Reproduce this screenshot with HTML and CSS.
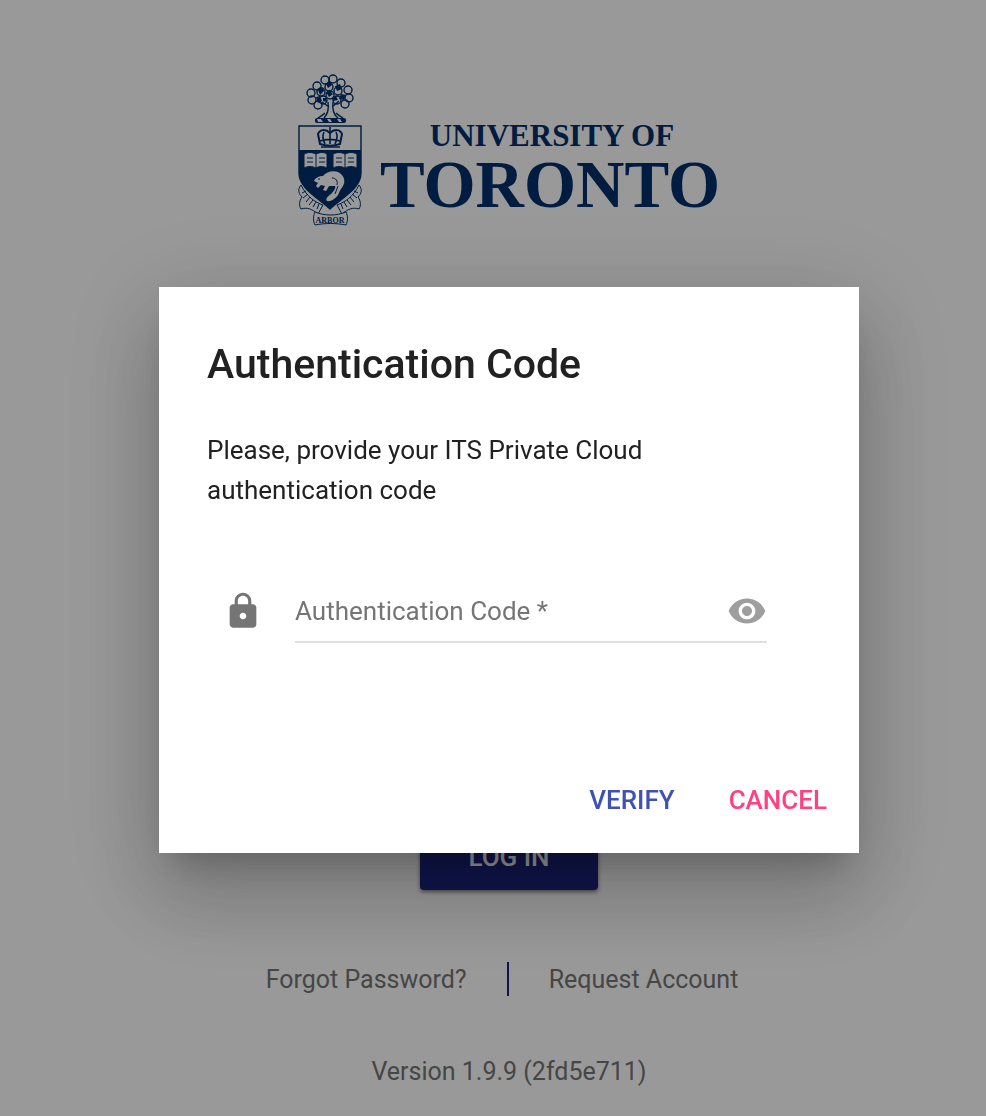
FILE: index.html
```html
<!DOCTYPE html>
<html lang="en">
<head>
    <meta charset="UTF-8">
    <meta name="viewport" content="width=device-width, initial-scale=1.0">
    <title>ITS Private Cloud</title>
    <link rel="stylesheet" href="styles.css">
</head>
<body>
    <main class="login-page">
        <svg class="logo" viewBox="-1 0 424 152" role="img" aria-label="University of Toronto">
            <!-- tree -->
            <g fill="none" stroke="#00306b" stroke-width="1.4">
                <circle cx="27" cy="6" r="4"/><circle cx="35" cy="5" r="4"/><circle cx="43" cy="9" r="4"/>
                <circle cx="19" cy="12" r="4"/><circle cx="50" cy="16" r="4"/><circle cx="13" cy="19" r="4"/>
                <circle cx="51" cy="24" r="4"/><circle cx="14" cy="26" r="4"/><circle cx="47" cy="30" r="4"/>
                <circle cx="20" cy="31" r="4"/><circle cx="23" cy="18" r="4"/><circle cx="31" cy="13" r="4"/>
                <circle cx="40" cy="17" r="4"/><circle cx="25" cy="26" r="4"/><circle cx="39" cy="26" r="4"/>
                <circle cx="32" cy="21" r="4"/>
                <path d="M30 28c1 7 0 12-4 16M35 28c-1 7 0 12 5 16M31 33l-7-5M34 33l7-6M20 44c3-2 5-3 7-5M45 44c-3-2-5-3-7-5"/>
            </g>
            <g fill="#00306b">
                <path d="M20 16l5-3 1 4-4 4zM28 10l4-3 2 4-4 3zM37 12l5-2 2 5-5 2zM43 20l5 1-2 5-5-1zM18 23l4-1 2 5-4 2zM28 18l4-1 3 3-4 3zM34 23l4-1 2 4-5 1zM25 24l3 0 1 4-4-1z"/>
                <rect x="17" y="44" width="31" height="5" rx="2"/>
            </g>
            <path d="M19 45h4l2 3h-5zM29 45h3l2 3h-3zM39 45h3l2 3h-3z" fill="#fff"/>
            <!-- motto ribbons -->
            <g fill="#fff" stroke="#00306b" stroke-width="1">
                <path d="M3 111c-4 5-2 9 1 12-3 4-3 9-1 12 6-2 11 0 17 5l5-9C17 128 9 123 3 111z"/>
                <path d="M61 111c4 5 2 9-1 12 3 4 3 9 1 12-6-2-11 0-17 5l-5-9c8-3 16-8 22-20z"/>
                <path d="M17 138c10 4 21 4 31 0 2 4 2 9 0 13-10-2-21-2-31 0-2-4-2-9 0-13z"/>
                <path d="M4 119l4-2M5 124l5-4M8 128l4-5M11 131l4-5M15 133l3-5M19 135l2-5M60 119l-4-2M59 124l-5-4M56 128l-4-5M53 131l-4-5M49 133l-3-5M45 135l-2-5"/>
            </g>
            <!-- shield -->
            <path d="M1 52h62v47c0 15-18 24-31 36C19 123 1 114 1 99z" fill="#fff" stroke="#00306b" stroke-width="1.4"/>
            <path d="M1 76h62v23c0 15-18 24-31 36C19 123 1 114 1 99z" fill="#00306b"/>
            <g fill="#fff" stroke="#00306b" stroke-width="1">
                <path d="M22 70l-2-10c2-5 8-5 12-1 4-4 10-4 12 1l-2 10c-6 2-14 2-20 0z" stroke-width="2"/>
                <path d="M32 53v17M26 58c-2 4-1 8 1 12M38 58c2 4 1 8-1 12M22 67c6-2 14-2 20 0M23 73h19" fill="none" stroke-width="1.6"/>
                <path d="M6 80c4-2 8-2 12 0 4-2 8-2 11 0v14c-4-2-8-2-11 0-4-2-8-2-12 0zM35 80c4-2 8-2 12 0 4-2 8-2 12 0v14c-4-2-8-2-12 0-4-2-8-2-12 0z"/>
                <path d="M18 80v14M47 80v14M9 84h6M9 88h6M21 84h6M21 88h6M38 84h6M38 88h6M50 84h6M50 88h6"/>
            </g>
            <!-- beaver -->
            <path d="M16 107c1-3 5-5 9-5 3-4 10-6 15-4 6 3 8 9 5 14-2 3-3 4-4 7-2 5-8 9-12 8-2-2 1-5 4-7 3-3 5-6 4-8l-5 0c-2 0-2 3-4 5l-3-1 2-4-4-1-3 3-2-2 2-3z" fill="#fff"/>
            <path d="M20 105h2M34 104c4 0 6 3 5 7M40 112l-3 8" stroke="#00306b" stroke-width="1" fill="none"/>
            <text class="logo-motto" x="32" y="149" text-anchor="middle">ARBOR</text>
            <text class="logo-small" x="254" y="72" text-anchor="middle">UNIVERSITY OF</text>
            <text class="logo-big" x="252" y="133" text-anchor="middle">TORONTO</text>
        </svg>
        <button class="login-button" type="submit">LOG IN</button>
        <nav class="links">
            <a href="#forgot">Forgot Password?</a>
            <span class="divider"></span>
            <a href="#request">Request Account</a>
        </nav>
        <p class="version">Version 1.9.9 (2fd5e711)</p>
    </main>

    <div class="overlay">
        <form class="dialog" role="dialog" aria-modal="true" aria-labelledby="dialog-title">
            <h2 class="dialog-title" id="dialog-title">Authentication Code</h2>
            <p class="dialog-text">Please, provide your ITS Private Cloud authentication code</p>
            <div class="code-row">
                <svg class="icon lock" viewBox="0 0 24 24" aria-hidden="true">
                    <path d="M18 8h-1V6c0-2.76-2.24-5-5-5S7 3.24 7 6v2H6c-1.1 0-2 .9-2 2v10c0 1.1.9 2 2 2h12c1.1 0 2-.9 2-2V10c0-1.1-.9-2-2-2zm-6 9c-1.1 0-2-.9-2-2s.9-2 2-2 2 .9 2 2-.9 2-2 2zm3.1-9H8.9V6c0-1.71 1.39-3.1 3.1-3.1s3.1 1.39 3.1 3.1v2z"/>
                </svg>
                <div class="code-field">
                    <input class="code-input" type="password" placeholder="Authentication Code *" aria-label="Authentication Code" required>
                    <button class="eye-button" type="button" aria-label="Show code">
                        <svg class="icon" viewBox="0 0 24 24" aria-hidden="true">
                            <path d="M12 4.5C7 4.5 2.73 7.61 1 12c1.73 4.39 6 7.5 11 7.5s9.27-3.11 11-7.5c-1.73-4.39-6-7.5-11-7.5zM12 17c-2.76 0-5-2.24-5-5s2.24-5 5-5 5 2.24 5 5-2.24 5-5 5zm0-8c-1.66 0-3 1.34-3 3s1.34 3 3 3 3-1.34 3-3-1.34-3-3-3z"/>
                        </svg>
                    </button>
                </div>
            </div>
            <div class="dialog-actions">
                <button class="text-button verify" type="submit">VERIFY</button>
                <button class="text-button cancel" type="button">CANCEL</button>
            </div>
        </form>
    </div>
</body>
</html>
```
FILE: styles.css
```css
* {
    box-sizing: border-box;
}
body {
    margin: 0;
    font-family: Roboto, Arial, sans-serif;
    font-size: 26px;
    background: #fff;
}
button, input {
    font: inherit;
    border: 0;
}
.login-page {
    display: flex;
    flex-direction: column;
    align-items: center;
    padding: 74px 0 24px 32px;
}
.logo {
    width: 424px;
    max-width: 100%;
}
.logo text {
    font-family: "Liberation Serif", "Times New Roman", serif;
    font-weight: bold;
    fill: #00306b;
}
.logo .logo-small {
    font-size: 31px;
}
.logo .logo-big {
    font-size: 67px;
}
.logo .logo-motto {
    font-size: 8px;
}
.login-button {
    margin-top: 592px;
    padding: 6px 48px 0;
    line-height: 66px;
    font-weight: 500;
    color: #fff;
    background: #1a237e;
    border-radius: 4px;
    box-shadow: 0 2px 4px rgba(0, 0, 0, 0.5);
}
.links {
    display: flex;
    align-items: center;
    gap: 40px;
    margin-top: 72px;
    padding-right: 14px;
    font-size: 25px;
}
.links a {
    color: #757575;
    text-decoration: none;
}
.divider {
    width: 2px;
    height: 34px;
    background: #1a237e;
}
.version {
    margin: 60px 0 0;
    font-size: 25px;
    line-height: 32px;
    color: #757575;
}

/* Dialog */
.overlay {
    position: fixed;
    inset: 0;
    display: flex;
    align-items: center;
    justify-content: center;
    padding: 24px 0 0 32px;
    background: rgba(0, 0, 0, 0.4);
}
.dialog {
    width: 700px;
    max-width: 100%;
    padding: 49px 16px 17px 48px;
    background: #fff;
    box-shadow: 0 22px 30px -14px rgba(0, 0, 0, 0.2), 0 48px 76px 6px rgba(0, 0, 0, 0.14), 0 18px 92px 16px rgba(0, 0, 0, 0.12);
}
.dialog-title {
    margin: 0 0 38px;
    font-size: 41px;
    font-weight: 500;
    line-height: 56px;
    color: #212121;
}
.dialog-text {
    max-width: 480px;
    margin: 0 0 81px;
    line-height: 40px;
    color: #212121;
}
.code-row {
    display: flex;
    gap: 32px;
    padding: 0 76px 0 16px;
}
.icon {
    display: block;
    flex: none;
    width: 40px;
    height: 40px;
    fill: currentColor;
}
.lock {
    color: #757575;
}
.code-field {
    display: flex;
    flex: 1;
    padding-bottom: 10px;
    border-bottom: 2px solid #e0e0e0;
}
.code-input {
    flex: 1;
    min-width: 0;
    height: 40px;
    padding: 0;
    background: none;
    outline: none;
}
.code-input::placeholder {
    color: #757575;
}
.eye-button {
    padding: 0;
    color: #9e9e9e;
    background: none;
}
.dialog-actions {
    display: flex;
    justify-content: flex-end;
    gap: 22px;
    margin-top: 121px;
}
.text-button {
    padding: 0 16px;
    font-weight: 500;
    line-height: 72px;
    background: none;
}
.verify {
    color: #3f51b5;
}
.cancel {
    color: #ff4081;
}
```
